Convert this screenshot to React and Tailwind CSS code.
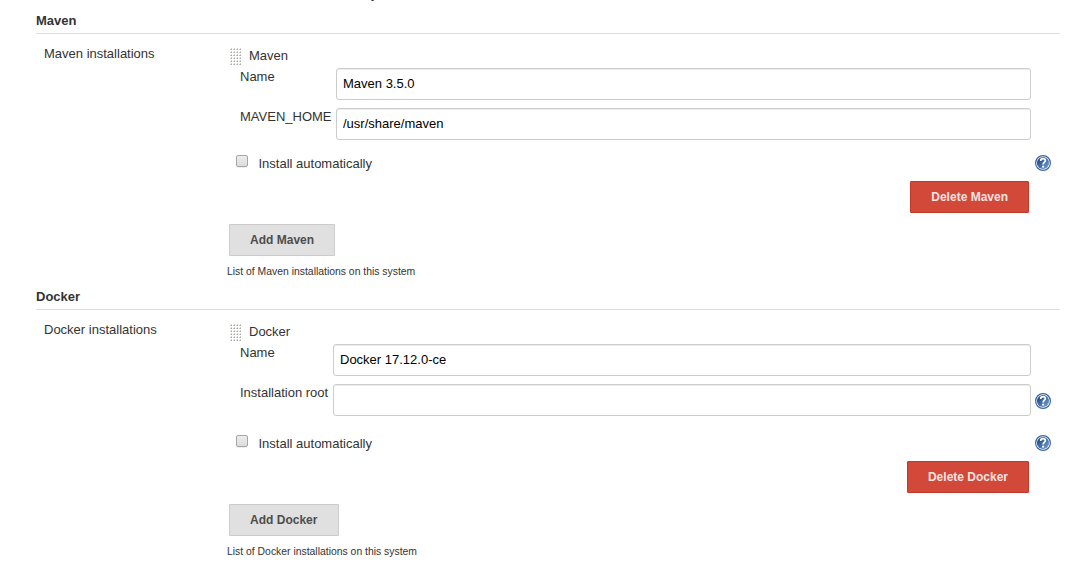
import React from 'react';

function HelpIcon() {
  return (
    <svg className="block h-4 w-4 shrink-0" viewBox="0 0 16 16" role="img" aria-label="Help">
      <defs>
        <linearGradient id="help-fill" x1="0" y1="0" x2="1" y2="1">
          <stop offset="0.25" stopColor="#2a5391" />
          <stop offset="1" stopColor="#7ba5d6" />
        </linearGradient>
      </defs>
      <circle cx="8" cy="8" r="7.4" fill="#fff" stroke="#3a649e" strokeWidth="1.2" />
      <circle cx="8" cy="8" r="6.1" fill="url(#help-fill)" />
      <path d="M5.800 6V4.500C6.300 3.900 7 3.700 8.100 3.700c1.400 0 2.200.7 2.200 1.900 0 1.700-2.200 1.900-2.200 3.900" fill="none" stroke="#fff" strokeWidth="1.700" />
      <rect x="7.100" y="10.700" width="2" height="1.900" fill="#fff" />
    </svg>
  );
}

function Grip() {
  const dots = [];
  for (let r = 0; r < 6; r++) {
    for (let c = 0; c < 4; c++) dots.push([c * 3, r * 3]);
  }
  return (
    <svg className="block h-[18px] w-3 shrink-0" viewBox="0 0 12 18" shapeRendering="crispEdges">
      {dots.map(([x, y]) => (
        <g key={`${x}-${y}`}>
          <rect x={x} y={y + 1} width="2" height="1" fill="#d0cec9" />
          <rect x={x + 1} y={y} width="1" height="1" fill="#d0cec9" />
          <rect x={x + 1} y={y + 1} width="1" height="1" fill="#aeaca8" />
        </g>
      ))}
    </svg>
  );
}

function Field({ label, value, labelWidth, help }) {
  return (
    <div className="flex h-10 items-start pl-[13px]">
      <label className={`${labelWidth} shrink-0 whitespace-nowrap pt-px`}>{label}</label>
      <input
        className="h-8 min-w-0 flex-1 rounded-[3px] border border-[#ccc] bg-white px-1.5 pb-0.5 text-[13px] text-black shadow-[inset_0_1px_1px_rgba(0,0,0,0.075)] outline-none"
        defaultValue={value}
      />
      <div className="w-[29px] shrink-0 pl-1 pt-[9px]">{help && <HelpIcon />}</div>
    </div>
  );
}

function ToolSection({ name, fields, labelWidth, gap }) {
  return (
    <section className="ml-9 w-[1024px]">
      <h2 className="h-6 border-b border-[#ddd] pt-[3px] font-bold">{name}</h2>
      <div className="flex">
        <div className="w-[191px] shrink-0 pl-2 pt-3">{name} installations</div>
        <div className="w-[833px] pt-3.5">
          <div className="flex h-5 items-start pl-[3px]">
            <Grip />
            <span className="ml-[7px]">{name}</span>
          </div>
          {fields.map((f) => (
            <Field key={f.label} {...f} labelWidth={labelWidth} />
          ))}
          <div className={`flex h-4 items-start pl-[9px] ${gap}`}>
            <input
              type="checkbox"
              className="-mt-px h-3 w-3 appearance-none rounded-[2px] border border-[#a6a6a6] bg-gradient-to-b from-[#ededed] to-[#dcdcdc] shadow-[0_1px_0_rgba(0,0,0,0.06)]"
            />
            <span className="ml-[10.500px]">Install automatically</span>
            <div className="-mt-px ml-auto mr-[9px]">
              <HelpIcon />
            </div>
          </div>
          <div className="mt-[9px] flex justify-end pr-[31px]">
            <button className="h-8 rounded-[1px] border border-[#c2392a] bg-[#d24939] px-5 text-xs font-bold text-[#f3e3e1]">
              Delete {name}
            </button>
          </div>
          <button className="ml-0.5 mt-[11px] block h-8 rounded-[1px] border border-[#ccc] bg-[#e0e0e0] pl-[20.100px] pr-[20.100px] text-xs font-bold text-[#4d4d4d]">
            Add {name}
          </button>
          <p className="mt-[9px] h-[21px] text-[10.400px] leading-[13px]">List of {name} installations on this system</p>
        </div>
      </div>
    </section>
  );
}

export default function App() {
  return (
    <main className="h-[565px] w-[1075px] overflow-hidden bg-white font-['Liberation_Sans',Arial,sans-serif] text-[13px] leading-[15px] text-[#333]">
      <div className="flex h-2.5 items-start overflow-hidden pl-[371px]">
        <span className="-mt-3.5">y</span>
      </div>
      <ToolSection
        name="Maven"
        labelWidth="w-24"
        gap="mt-2"
        fields={[
          { label: 'Name', value: 'Maven 3.5.0' },
          { label: 'MAVEN_HOME', value: '/usr/share/maven' },
        ]}
      />
      <ToolSection
        name="Docker"
        labelWidth="w-[93px]"
        gap="mt-3"
        fields={[
          { label: 'Name', value: 'Docker 17.12.0-ce' },
          { label: 'Installation root', value: '', help: true },
        ]}
      />
    </main>
  );
}
